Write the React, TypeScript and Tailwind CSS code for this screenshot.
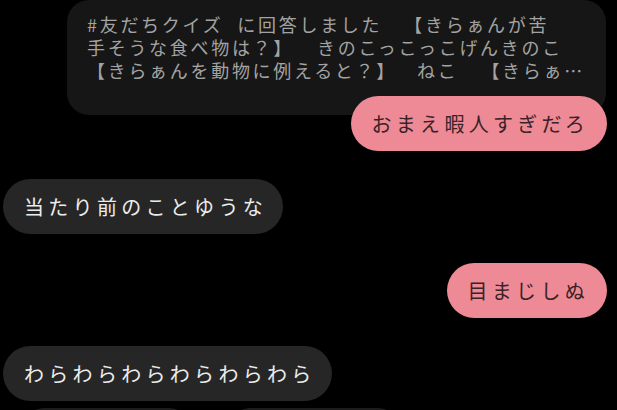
import React from "react";

const font = "font-['Noto_Sans_CJK_JP','Noto_Sans',sans-serif]";

function Right({ text }: { text: string }) {
  return (
    <div className="self-end mr-[10px] h-[55px] rounded-full bg-[#ee8a96] pl-[21px] pr-[18px] flex items-center text-[20px] tracking-[4.3px] text-[#3a2226] whitespace-nowrap relative">
      {text}
    </div>
  );
}

function Left({ text }: { text: string }) {
  return (
    <div className="self-start ml-[3px] h-[55px] rounded-full bg-[#262626] pl-[21px] pr-[16px] flex items-center text-[20px] tracking-[4.3px] text-[#ececec] whitespace-nowrap">
      {text}
    </div>
  );
}

function Sp({ w }: { w: string }) {
  return <span className={`inline-block ${w}`} />;
}

export default function App() {
  return (
    <div lang="ja" className={`w-[617px] h-[410px] overflow-hidden bg-black ${font}`}>
      <div className="flex flex-col">
        <div className="ml-[67px] mr-[11px] h-[115px] rounded-[22px] bg-[#161616] pl-[20px] pt-[13px] text-[18px] leading-[23px] tracking-[2.7px] text-[#a3a3a3] whitespace-pre">
          <div>
            #友だちクイズ<Sp w="w-[14px]" />に回答しました<Sp w="w-[22px]" />【きらぁんが苦
          </div>
          <div>
            手そうな食べ物は？】<Sp w="w-[23px]" />きのこっこっこげんきのこ
          </div>
          <div>
            【きらぁんを動物に例えると？】<Sp w="w-[20px]" />ねこ<Sp w="w-[23px]" />【きらぁ…
          </div>
        </div>
        <div className="mt-[-19px] flex flex-col">
          <Right text="おまえ暇人すぎだろ" />
        </div>
        <div className="mt-[28px] flex flex-col">
          <Left text="当たり前のことゆうな" />
        </div>
        <div className="mt-[29px] flex flex-col">
          <Right text="目まじしぬ" />
        </div>
        <div className="mt-[28px] flex flex-col">
          <Left text="わらわらわらわらわらわら" />
        </div>
        <div className="mt-[7px] flex gap-[41px] pl-[24px]">
          <div className="w-[165px] h-[40px] rounded-[20px] bg-[#1c1c1c]" />
          <div className="w-[168px] h-[40px] rounded-[20px] bg-[#1c1c1c]" />
        </div>
      </div>
    </div>
  );
}
